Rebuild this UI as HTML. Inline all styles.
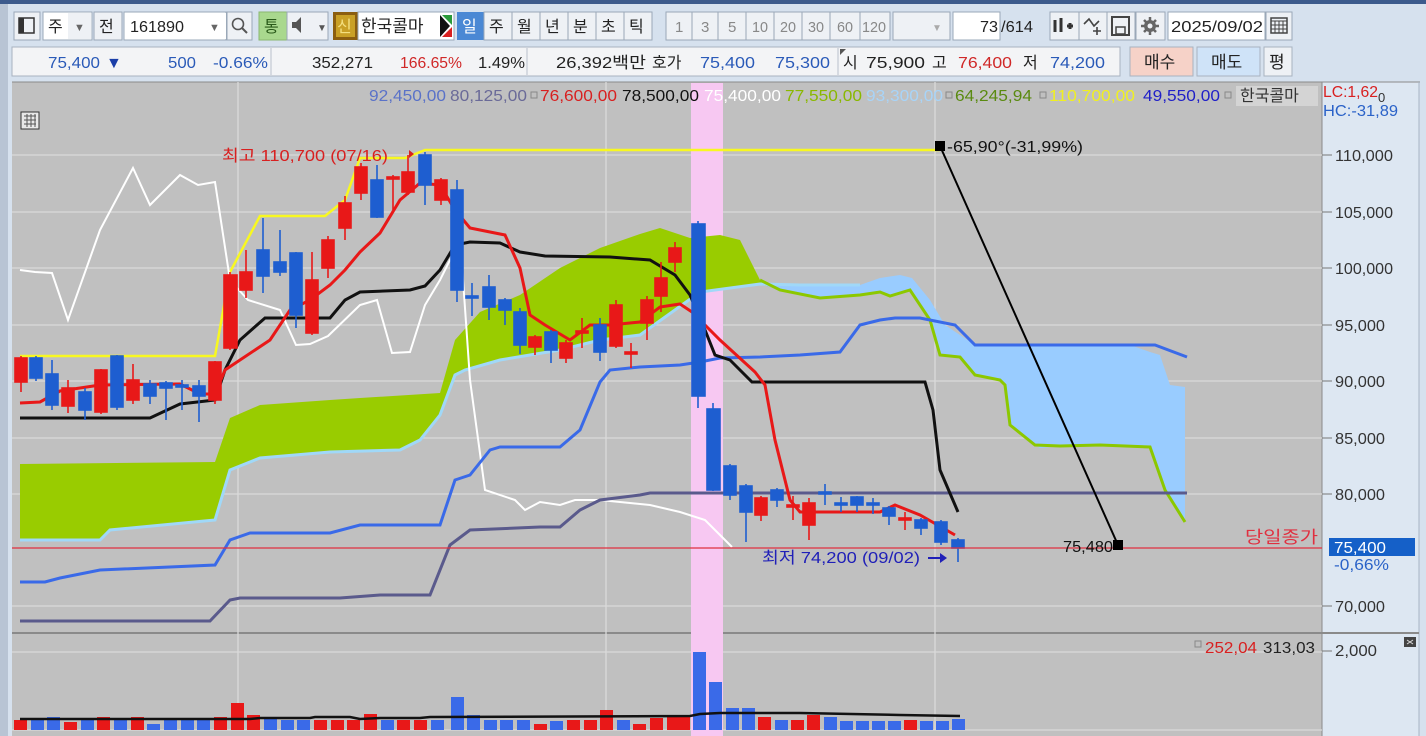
<!DOCTYPE html>
<html><head><meta charset="utf-8"><style>
html,body{margin:0;padding:0;width:1426px;height:736px;overflow:hidden;background:#d6e1ee}
svg{display:block}
text{font-family:"Liberation Sans Narrow","Liberation Sans","Noto Sans CJK KR",sans-serif}
</style></head><body>
<svg width="1426" height="736" viewBox="0 0 1426 736" xmlns="http://www.w3.org/2000/svg">
<rect x="0" y="0" width="1426" height="736" fill="#d6e1ee"/>
<rect x="0" y="0" width="1426" height="4" fill="#3c5a8c"/>
<rect x="0" y="4" width="8" height="732" fill="#b8c4d4"/>
<g font-size="16" fill="#222">
<rect x="14" y="12" width="26" height="28" fill="#eef1f5" stroke="#9aa8b8"/>
<rect x="19" y="18" width="15" height="15" fill="none" stroke="#333" stroke-width="1.5"/><rect x="19" y="18" width="5" height="15" fill="#333"/>
<rect x="43" y="12" width="49" height="28" fill="#fff" stroke="#9aa8b8"/><text x="48" y="32">주</text><rect x="68" y="13" width="23" height="26" fill="#eef1f5"/><text x="74" y="31" font-size="11" fill="#666">▼</text>
<rect x="94" y="12" width="28" height="28" fill="#eef1f5" stroke="#9aa8b8"/><text x="99" y="32">전</text>
<rect x="124" y="12" width="102" height="28" fill="#fff" stroke="#9aa8b8"/><text x="130" y="32" textLength="54" lengthAdjust="spacingAndGlyphs">161890</text>
<rect x="206" y="13" width="20" height="26" fill="#fff"/><text x="209" y="31" font-size="11" fill="#666">▼</text>
<rect x="227" y="12" width="25" height="28" fill="#eef1f5" stroke="#9aa8b8"/><circle cx="238" cy="24" r="5.5" fill="none" stroke="#555" stroke-width="1.6"/><line x1="242" y1="28" x2="247" y2="33" stroke="#555" stroke-width="2"/>
<rect x="259" y="12" width="28" height="28" fill="#a9d88e" stroke="#8ab870"/><text x="264" y="32" fill="#2a5a1a">통</text>
<rect x="287" y="12" width="41" height="28" fill="#eef1f5" stroke="#9aa8b8"/><path d="M292 22h4l5-5v16l-5-5h-4z" fill="#555"/><text x="317" y="31" font-size="10" fill="#555">▼</text>
<rect x="333" y="12" width="25" height="28" fill="#8b5e10"/><rect x="336" y="15" width="19" height="22" fill="#c9a026"/><text x="337" y="32" fill="#f4e080">신</text>
<rect x="358" y="12" width="96" height="28" fill="#fff" stroke="#9aa8b8"/><text x="361" y="32" font-size="17">한국콜마</text>
<path d="M442 15l10 10v-10z" fill="#2a9a3a"/><path d="M442 37l10-10v10z" fill="#d82020"/><path d="M440 15l10 11-10 11z" fill="#111"/>
<rect x="457" y="12" width="27" height="28" fill="#4a88d4"/><text x="462" y="32" fill="#fff">일</text>
<g fill="#eef1f5" stroke="#9aa8b8"><rect x="484" y="12" width="28" height="28"/><rect x="512" y="12" width="28" height="28"/><rect x="540" y="12" width="28" height="28"/><rect x="568" y="12" width="28" height="28"/><rect x="596" y="12" width="28" height="28"/><rect x="624" y="12" width="28" height="28"/></g>
<text x="489" y="32">주</text><text x="517" y="32">월</text><text x="545" y="32">년</text><text x="573" y="32">분</text><text x="601" y="32">초</text><text x="629" y="32">틱</text>
<g fill="#eef1f5" stroke="#9aa8b8"><rect x="666" y="12" width="26" height="28"/><rect x="692" y="12" width="26" height="28"/><rect x="718" y="12" width="28" height="28"/><rect x="746" y="12" width="28" height="28"/><rect x="774" y="12" width="28" height="28"/><rect x="802" y="12" width="28" height="28"/><rect x="830" y="12" width="30" height="28"/><rect x="860" y="12" width="30" height="28"/></g>
<g fill="#888" font-size="15"><text x="675" y="32">1</text><text x="701" y="32">3</text><text x="728" y="32">5</text><text x="752" y="32" textLength="16" lengthAdjust="spacingAndGlyphs">10</text><text x="780" y="32" textLength="16" lengthAdjust="spacingAndGlyphs">20</text><text x="808" y="32" textLength="16" lengthAdjust="spacingAndGlyphs">30</text><text x="837" y="32" textLength="16" lengthAdjust="spacingAndGlyphs">60</text><text x="862" y="32" textLength="24" lengthAdjust="spacingAndGlyphs">120</text></g>
<rect x="893" y="12" width="57" height="28" fill="#eef1f5" stroke="#9aa8b8"/><text x="932" y="31" font-size="10" fill="#aaa">▼</text>
<rect x="953" y="12" width="47" height="28" fill="#fff" stroke="#9aa8b8"/><text x="980" y="32" textLength="18" lengthAdjust="spacingAndGlyphs">73</text><text x="1001" y="32" textLength="32" lengthAdjust="spacingAndGlyphs">/614</text>
<g fill="#eef1f5" stroke="#9aa8b8"><rect x="1050" y="12" width="29" height="28"/><rect x="1079" y="12" width="28" height="28"/><rect x="1107" y="12" width="28" height="28"/><rect x="1136" y="12" width="29" height="28"/></g>
<path d="M1055 20v12M1061 18v14M1067 26h6M1070 23v6" stroke="#333" stroke-width="3"/>
<path d="M1084 24l5-5 5 7 5-5M1097 27v8M1093 31h8" stroke="#444" stroke-width="1.6" fill="none"/>
<rect x="1112" y="17" width="17" height="18" fill="none" stroke="#444" stroke-width="2"/><rect x="1116" y="27" width="9" height="7" fill="none" stroke="#444" stroke-width="1.5"/>
<path d="M1150 17v18M1141 26h18M1144 20l12 12M1156 20l-12 12" stroke="#666" stroke-width="2.5"/><circle cx="1150" cy="26" r="6" fill="#666"/><circle cx="1150" cy="26" r="2.5" fill="#eef1f5"/>
<rect x="1168" y="12" width="97" height="28" fill="#fff" stroke="#9aa8b8"/><text x="1171" y="32" textLength="92" lengthAdjust="spacingAndGlyphs">2025/09/02</text>
<rect x="1266" y="12" width="26" height="28" fill="#eef1f5" stroke="#9aa8b8"/><rect x="1271" y="18" width="16" height="15" fill="none" stroke="#444" stroke-width="1.5"/><path d="M1271 21h16M1275 21v12M1279 21v12M1283 21v12M1271 25h16M1271 29h16" stroke="#444" stroke-width="1"/>
</g>
<g font-size="16">
<rect x="12" y="47" width="1108" height="29" fill="#f3f4f6" stroke="#a8b2c0"/>
<line x1="271" y1="48" x2="271" y2="75" stroke="#b8c0cc"/><line x1="527" y1="48" x2="527" y2="75" stroke="#b8c0cc"/><line x1="838" y1="48" x2="838" y2="75" stroke="#b8c0cc"/>
<text x="48" y="68" fill="#2a5ab8" textLength="52" lengthAdjust="spacingAndGlyphs">75,400</text><text x="106" y="68" fill="#1a3ea8">▼</text>
<text x="168" y="68" fill="#2a5ab8" textLength="28" lengthAdjust="spacingAndGlyphs">500</text><text x="213" y="68" fill="#2a5ab8" textLength="55" lengthAdjust="spacingAndGlyphs">-0.66%</text>
<text x="312" y="68" fill="#222" textLength="61" lengthAdjust="spacingAndGlyphs">352,271</text><text x="400" y="68" fill="#d02828" textLength="62" lengthAdjust="spacingAndGlyphs">166.65%</text><text x="478" y="68" fill="#222" textLength="47" lengthAdjust="spacingAndGlyphs">1.49%</text>
<text x="556" y="68" fill="#222" textLength="90" lengthAdjust="spacingAndGlyphs">26,392백만</text><text x="652" y="68" fill="#222">호가</text>
<text x="700" y="68" fill="#2a5ab8" textLength="55" lengthAdjust="spacingAndGlyphs">75,400</text><text x="775" y="68" fill="#2a5ab8" textLength="55" lengthAdjust="spacingAndGlyphs">75,300</text>
<path d="M840 49h6l-6 6z" fill="#555"/><text x="843" y="68" fill="#222">시</text><text x="866" y="68" fill="#222" textLength="59" lengthAdjust="spacingAndGlyphs">75,900</text>
<text x="932" y="68" fill="#222">고</text><text x="958" y="68" fill="#d02828" textLength="54" lengthAdjust="spacingAndGlyphs">76,400</text>
<text x="1023" y="68" fill="#222">저</text><text x="1050" y="68" fill="#2a5ab8" textLength="55" lengthAdjust="spacingAndGlyphs">74,200</text>
<rect x="1130" y="47" width="63" height="29" fill="#f6d2c8" stroke="#a8b2c0"/><text x="1144" y="68" fill="#222" font-size="17">매수</text>
<rect x="1197" y="47" width="63" height="29" fill="#cfe3f8" stroke="#a8b2c0"/><text x="1211" y="68" fill="#222" font-size="17">매도</text>
<rect x="1264" y="47" width="28" height="29" fill="#eef1f5" stroke="#a8b2c0"/><text x="1269" y="68" fill="#222" font-size="17">평</text>
</g>
<rect x="12" y="82" width="1310" height="654" fill="#c0c0c0"/>
<rect x="1322" y="82" width="97" height="654" fill="#dde7f2"/>
<line x1="1322" y1="82" x2="1322" y2="736" stroke="#8a8a8a"/>
<line x1="12" y1="82" x2="1420" y2="82" stroke="#8a8a8a"/>
<line x1="1419" y1="82" x2="1419" y2="736" stroke="#a8b4c4"/>
<line x1="12" y1="633" x2="1419" y2="633" stroke="#8a8a8a" stroke-width="2"/>
<g stroke="#dadada" stroke-width="1.3">
<line x1="12" y1="155" x2="1322" y2="155"/><line x1="12" y1="212" x2="1322" y2="212"/><line x1="12" y1="268" x2="1322" y2="268"/><line x1="12" y1="325" x2="1322" y2="325"/><line x1="12" y1="381" x2="1322" y2="381"/><line x1="12" y1="438" x2="1322" y2="438"/><line x1="12" y1="494" x2="1322" y2="494"/><line x1="12" y1="606" x2="1322" y2="606"/>
<line x1="12" y1="652" x2="1322" y2="652"/><line x1="12" y1="730" x2="1322" y2="730"/>
<line x1="238" y1="82" x2="238" y2="730"/><line x1="606" y1="82" x2="606" y2="730"/><line x1="935" y1="82" x2="935" y2="730"/>
</g>
<rect x="691" y="83" width="32" height="653" fill="#f7c8f2"/>
<g font-size="16">
<text x="369" y="101" fill="#5a72c8" textLength="77" lengthAdjust="spacingAndGlyphs">92,450,00</text>
<text x="450" y="101" fill="#6a6a98" textLength="77" lengthAdjust="spacingAndGlyphs">80,125,00</text>
<rect x="531" y="92" width="6" height="6" fill="none" stroke="#888"/>
<text x="540" y="101" fill="#d82020" textLength="77" lengthAdjust="spacingAndGlyphs">76,600,00</text>
<text x="622" y="101" fill="#111" textLength="77" lengthAdjust="spacingAndGlyphs">78,500,00</text>
<text x="704" y="101" fill="#fff" textLength="77" lengthAdjust="spacingAndGlyphs">75,400,00</text>
<text x="785" y="101" fill="#8ab800" textLength="77" lengthAdjust="spacingAndGlyphs">77,550,00</text>
<text x="866" y="101" fill="#a8d4f8" textLength="77" lengthAdjust="spacingAndGlyphs">93,300,00</text>
<rect x="946" y="92" width="6" height="6" fill="none" stroke="#888"/>
<text x="955" y="101" fill="#5a8a10" textLength="77" lengthAdjust="spacingAndGlyphs">64,245,94</text>
<rect x="1040" y="92" width="6" height="6" fill="none" stroke="#888"/>
<text x="1049" y="101" fill="#f0f020" textLength="86" lengthAdjust="spacingAndGlyphs">110,700,00</text>
<text x="1143" y="101" fill="#2020c8" textLength="77" lengthAdjust="spacingAndGlyphs">49,550,00</text>
<rect x="1225" y="92" width="6" height="6" fill="none" stroke="#888"/>
<rect x="1236" y="86" width="82" height="20" fill="#d4d4d4"/>
<text x="1240" y="101" fill="#333" font-size="16">한국콜마</text>
</g>
<rect x="21" y="112" width="18" height="17" fill="#e8e8e8" stroke="#333"/><path d="M24 116h12M24 120h12M24 124h12M27 114v13M31 114v13M35 114v13" stroke="#555" stroke-width="1"/>
<polygon fill="#99cc00" points="20,464 215,462 230,418 260,405 330,400 360,398 440,393 455,340 480,312 520,295 560,268 600,248 640,234 660,228 690,238 720,235 740,240 760,280 780,290 760,284 700,292 640,335 600,340 560,350 500,360 465,370 455,375 440,415 420,440 400,450 330,452 260,458 230,470 215,520 110,530 100,540 20,540"/>
<polygon fill="#99ccff" points="760,284 800,285 860,285 880,278 900,275 912,278 930,300 945,325 960,335 975,345 1130,345 1150,352 1160,355 1170,385 1185,387 1185,522 1165,490 1150,447 1120,447 1100,445 1060,446 1040,448 1035,445 1010,425 1005,385 1000,380 975,375 960,357 940,355 930,320 910,290 890,296 880,292 820,298 780,290"/>
<polyline fill="none" stroke="#a0d8f8" stroke-width="3" points="20,540 100,540 110,530 215,520 230,470 260,458 330,452 400,450 420,440 440,415 455,375 465,370 500,360 560,350 600,340 640,335 700,292 760,284 800,285 860,285"/>
<polyline fill="none" stroke="#8cc800" stroke-width="3" points="760,280 780,290 820,298 860,295 880,292 890,296 910,290 930,320 940,355 960,357 975,375 1000,380 1005,385 1010,425 1035,445 1060,446 1100,445 1150,447 1165,490 1185,522"/>
<polyline fill="none" stroke="#f8f820" stroke-width="2.5" points="20,356 215,356 230,272 260,216 325,216 345,200 360,158 405,158 425,150 940,150"/>
<polyline fill="none" stroke="#fff" stroke-width="2" points="20,270 35,272 52,273 68,320 100,230 133,168 150,205 180,175 198,185 215,182 230,280 248,300 280,310 296,345 310,344 328,336 360,305 377,300 392,353 410,352 425,305 440,280 455,250 462,265 470,380 485,490 515,500 525,510 540,502 560,505 575,500 600,500 630,503 650,505 680,512 705,520 720,535 732,547"/>
<polyline fill="none" stroke="#5a5a8c" stroke-width="3" points="20,621 210,621 230,600 240,598 340,598 380,595 430,595 450,545 470,530 540,527 560,527 580,510 600,500 640,495 650,493 1187,493"/>
<polyline fill="none" stroke="#3a6ae8" stroke-width="3" points="20,582 45,582 60,578 100,570 215,565 230,540 250,533 330,533 360,525 440,525 455,480 470,475 490,450 500,447 560,447 580,430 600,382 610,370 640,367 680,365 700,362 720,358 760,357 800,355 840,352 860,325 880,320 895,318 920,318 955,325 975,345 1155,345 1187,357"/>
<polyline fill="none" stroke="#111" stroke-width="3" points="20,418 150,418 180,404 215,400 225,370 240,340 265,318 330,318 345,300 360,292 410,290 425,286 440,270 455,245 470,242 500,243 520,252 545,256 610,257 650,260 675,275 690,295 705,330 715,355 730,360 752,382 925,382 933,410 940,470 958,512"/>
<polyline fill="none" stroke="#e81818" stroke-width="3" points="20,403 40,402 60,391 80,388 100,385 180,384 200,394 215,394 225,370 240,360 270,340 290,310 310,300 330,285 345,270 360,252 380,233 400,200 420,183 440,185 455,210 470,228 490,232 505,235 520,268 530,315 545,325 570,340 590,325 610,325 640,322 660,307 680,304 692,312 720,340 755,372 765,385 775,440 790,500 800,512 880,512 895,505 920,515 955,535"/>
<g stroke-width="1.6">
<g stroke="#e81818" fill="#e81818">
<line x1="21" y1="356" x2="21" y2="392"/><rect x="15" y="358" width="12" height="24"/>
<line x1="68" y1="380" x2="68" y2="413"/><rect x="62" y="388" width="12" height="18"/>
<line x1="101" y1="369" x2="101" y2="414"/><rect x="95" y="370" width="12" height="42"/>
<line x1="133" y1="364" x2="133" y2="404"/><rect x="127" y="380" width="12" height="20"/>
<line x1="215" y1="361" x2="215" y2="404"/><rect x="209" y="362" width="12" height="38"/>
<line x1="230" y1="272" x2="230" y2="350"/><rect x="224" y="275" width="13" height="73"/>
<line x1="246" y1="250" x2="246" y2="298"/><rect x="240" y="272" width="12" height="18"/>
<line x1="312" y1="252" x2="312" y2="335"/><rect x="306" y="280" width="12" height="53"/>
<line x1="328" y1="236" x2="328" y2="278"/><rect x="322" y="240" width="12" height="28"/>
<line x1="345" y1="196" x2="345" y2="240"/><rect x="339" y="203" width="12" height="25"/>
<line x1="361" y1="163" x2="361" y2="200"/><rect x="355" y="167" width="12" height="26"/>
<line x1="393" y1="175" x2="393" y2="210"/><rect x="387" y="177" width="12" height="2"/>
<line x1="408" y1="155" x2="408" y2="195"/><rect x="402" y="172" width="12" height="20"/>
<line x1="441" y1="178" x2="441" y2="205"/><rect x="435" y="180" width="12" height="20"/>
<line x1="535" y1="335" x2="535" y2="355"/><rect x="529" y="337" width="12" height="10"/>
<line x1="566" y1="340" x2="566" y2="363"/><rect x="560" y="343" width="12" height="15"/>
<line x1="582" y1="318" x2="582" y2="348"/><rect x="576" y="331" width="12" height="2"/>
<line x1="616" y1="300" x2="616" y2="348"/><rect x="610" y="305" width="12" height="41"/>
<line x1="631" y1="343" x2="631" y2="368"/><rect x="625" y="352" width="12" height="2"/>
<line x1="647" y1="296" x2="647" y2="340"/><rect x="641" y="300" width="12" height="23"/>
<line x1="661" y1="262" x2="661" y2="312"/><rect x="655" y="278" width="12" height="18"/>
<line x1="675" y1="242" x2="675" y2="272"/><rect x="669" y="248" width="12" height="14"/>
<line x1="761" y1="496" x2="761" y2="521"/><rect x="755" y="498" width="12" height="17"/>
<line x1="793" y1="496" x2="793" y2="520"/><rect x="787" y="505" width="12" height="2"/>
<line x1="809" y1="498" x2="809" y2="540"/><rect x="803" y="503" width="12" height="22"/>
<line x1="905" y1="512" x2="905" y2="530"/><rect x="899" y="518" width="12" height="2"/>
</g>
<g stroke="#1e5ed0" fill="#1e5ed0">
<line x1="36" y1="356" x2="36" y2="381"/><rect x="30" y="358" width="12" height="20"/>
<line x1="52" y1="360" x2="52" y2="410"/><rect x="46" y="374" width="12" height="31"/>
<line x1="85" y1="388" x2="85" y2="420"/><rect x="79" y="392" width="12" height="18"/>
<line x1="117" y1="355" x2="117" y2="410"/><rect x="111" y="356" width="12" height="51"/>
<line x1="150" y1="380" x2="150" y2="404"/><rect x="144" y="384" width="12" height="12"/>
<line x1="166" y1="381" x2="166" y2="420"/><rect x="160" y="383" width="12" height="5"/>
<line x1="182" y1="380" x2="182" y2="410"/><rect x="176" y="385" width="12" height="2"/>
<line x1="199" y1="380" x2="199" y2="422"/><rect x="193" y="386" width="12" height="10"/>
<line x1="263" y1="218" x2="263" y2="293"/><rect x="257" y="250" width="12" height="26"/>
<line x1="280" y1="230" x2="280" y2="276"/><rect x="274" y="262" width="12" height="10"/>
<line x1="296" y1="252" x2="296" y2="328"/><rect x="290" y="253" width="12" height="62"/>
<line x1="377" y1="165" x2="377" y2="218"/><rect x="371" y="180" width="12" height="37"/>
<line x1="425" y1="152" x2="425" y2="205"/><rect x="419" y="155" width="12" height="30"/>
<line x1="457" y1="180" x2="457" y2="302"/><rect x="451" y="190" width="12" height="100"/>
<line x1="472" y1="283" x2="472" y2="316"/><rect x="466" y="296" width="12" height="2"/>
<line x1="489" y1="275" x2="489" y2="320"/><rect x="483" y="287" width="12" height="20"/>
<line x1="505" y1="298" x2="505" y2="325"/><rect x="499" y="300" width="12" height="10"/>
<line x1="520" y1="308" x2="520" y2="354"/><rect x="514" y="312" width="12" height="33"/>
<line x1="551" y1="330" x2="551" y2="363"/><rect x="545" y="332" width="12" height="18"/>
<line x1="600" y1="318" x2="600" y2="361"/><rect x="594" y="325" width="12" height="27"/>
<line x1="698" y1="221" x2="698" y2="408"/><rect x="692" y="224" width="13" height="172"/>
<line x1="713" y1="403" x2="713" y2="491"/><rect x="707" y="409" width="13" height="81"/>
<line x1="730" y1="464" x2="730" y2="500"/><rect x="724" y="466" width="12" height="29"/>
<line x1="746" y1="484" x2="746" y2="542"/><rect x="740" y="486" width="12" height="26"/>
<line x1="777" y1="488" x2="777" y2="507"/><rect x="771" y="490" width="12" height="10"/>
<line x1="825" y1="484" x2="825" y2="505"/><rect x="819" y="492" width="12" height="2"/>
<line x1="841" y1="497" x2="841" y2="512"/><rect x="835" y="503" width="12" height="2"/>
<line x1="857" y1="496" x2="857" y2="512"/><rect x="851" y="497" width="12" height="8"/>
<line x1="873" y1="498" x2="873" y2="514"/><rect x="867" y="503" width="12" height="2"/>
<line x1="889" y1="506" x2="889" y2="525"/><rect x="883" y="508" width="12" height="8"/>
<line x1="921" y1="518" x2="921" y2="535"/><rect x="915" y="520" width="12" height="8"/>
<line x1="941" y1="520" x2="941" y2="545"/><rect x="935" y="522" width="12" height="20"/>
<line x1="958" y1="538" x2="958" y2="562"/><rect x="952" y="540" width="12" height="8"/>
</g>
</g>
<line x1="12" y1="548" x2="1322" y2="548" stroke="#e03040" stroke-width="1.3"/>
<text x="1245" y="543" fill="#e03040" font-size="17" textLength="73" lengthAdjust="spacingAndGlyphs">당일종가</text>
<line x1="940" y1="146" x2="1118" y2="545" stroke="#000" stroke-width="2"/>
<rect x="935" y="141" width="10" height="10" fill="#000"/><rect x="1113" y="540" width="10" height="10" fill="#000"/>
<text x="947" y="152" fill="#111" font-size="16" textLength="136" lengthAdjust="spacingAndGlyphs">-65,90°(-31,99%)</text>
<text x="1063" y="552" fill="#111" font-size="16" textLength="50" lengthAdjust="spacingAndGlyphs">75,480</text>
<text x="222" y="161" fill="#d82020" font-size="16" textLength="166" lengthAdjust="spacingAndGlyphs">최고 110,700 (07/16)</text>
<path d="M409 150l5 4-5 4z" fill="#d82020"/>
<text x="762" y="563" fill="#2020b8" font-size="16" textLength="158" lengthAdjust="spacingAndGlyphs">최저 74,200 (09/02)</text>
<path d="M928 558h14" stroke="#2020b8" stroke-width="2"/><path d="M940 553l7 5-7 5z" fill="#2020b8"/>
<g fill="#333" font-size="16">
<text x="1323" y="97" fill="#d82020" textLength="55" lengthAdjust="spacingAndGlyphs">LC:1,62</text><text x="1378" y="102" font-size="13">0</text>
<text x="1323" y="116" fill="#2a62c8" textLength="75" lengthAdjust="spacingAndGlyphs">HC:-31,89</text>
<text x="1335" y="161" textLength="58" lengthAdjust="spacingAndGlyphs">110,000</text><text x="1335" y="218" textLength="58" lengthAdjust="spacingAndGlyphs">105,000</text><text x="1335" y="274" textLength="58" lengthAdjust="spacingAndGlyphs">100,000</text>
<text x="1335" y="331" textLength="50" lengthAdjust="spacingAndGlyphs">95,000</text><text x="1335" y="387" textLength="50" lengthAdjust="spacingAndGlyphs">90,000</text><text x="1335" y="444" textLength="50" lengthAdjust="spacingAndGlyphs">85,000</text>
<text x="1335" y="500" textLength="50" lengthAdjust="spacingAndGlyphs">80,000</text><text x="1335" y="612" textLength="50" lengthAdjust="spacingAndGlyphs">70,000</text><text x="1335" y="656" textLength="42" lengthAdjust="spacingAndGlyphs">2,000</text>
</g>
<g stroke="#777"><line x1="1322" y1="155" x2="1332" y2="155"/><line x1="1322" y1="212" x2="1332" y2="212"/><line x1="1322" y1="268" x2="1332" y2="268"/><line x1="1322" y1="325" x2="1332" y2="325"/><line x1="1322" y1="381" x2="1332" y2="381"/><line x1="1322" y1="438" x2="1332" y2="438"/><line x1="1322" y1="494" x2="1332" y2="494"/><line x1="1322" y1="606" x2="1332" y2="606"/><line x1="1322" y1="651" x2="1332" y2="651"/></g>
<rect x="1329" y="538" width="86" height="18" fill="#1560c8"/>
<text x="1334" y="553" fill="#fff" font-size="16" textLength="52" lengthAdjust="spacingAndGlyphs">75,400</text>
<text x="1334" y="570" fill="#2a62c8" font-size="16" textLength="55" lengthAdjust="spacingAndGlyphs">-0,66%</text>
<rect x="1404" y="637" width="12" height="10" fill="#444"/><path d="M1407 644l6-4M1407 640l6 4" stroke="#ddd" stroke-width="1"/>
<rect x="1195" y="641" width="6" height="6" fill="none" stroke="#888"/>
<text x="1205" y="653" fill="#d82020" font-size="16" textLength="52" lengthAdjust="spacingAndGlyphs">252,04</text>
<text x="1263" y="653" fill="#222" font-size="16" textLength="52" lengthAdjust="spacingAndGlyphs">313,03</text>
<g>
<rect x="14" y="720" width="13" height="10" fill="#e81818"/>
<rect x="31" y="720" width="13" height="10" fill="#3a6ae8"/>
<rect x="47" y="717" width="13" height="13" fill="#3a6ae8"/>
<rect x="64" y="722" width="13" height="8" fill="#e81818"/>
<rect x="81" y="720" width="13" height="10" fill="#3a6ae8"/>
<rect x="97" y="717" width="13" height="13" fill="#e81818"/>
<rect x="114" y="720" width="13" height="10" fill="#3a6ae8"/>
<rect x="131" y="717" width="13" height="13" fill="#e81818"/>
<rect x="147" y="724" width="13" height="6" fill="#3a6ae8"/>
<rect x="164" y="720" width="13" height="10" fill="#3a6ae8"/>
<rect x="181" y="720" width="13" height="10" fill="#3a6ae8"/>
<rect x="197" y="720" width="13" height="10" fill="#3a6ae8"/>
<rect x="214" y="717" width="13" height="13" fill="#e81818"/>
<rect x="231" y="703" width="13" height="27" fill="#e81818"/>
<rect x="247" y="715" width="13" height="15" fill="#e81818"/>
<rect x="264" y="717" width="13" height="13" fill="#3a6ae8"/>
<rect x="281" y="720" width="13" height="10" fill="#3a6ae8"/>
<rect x="297" y="720" width="13" height="10" fill="#3a6ae8"/>
<rect x="314" y="720" width="13" height="10" fill="#e81818"/>
<rect x="331" y="720" width="13" height="10" fill="#e81818"/>
<rect x="347" y="720" width="13" height="10" fill="#e81818"/>
<rect x="364" y="714" width="13" height="16" fill="#e81818"/>
<rect x="381" y="720" width="13" height="10" fill="#3a6ae8"/>
<rect x="397" y="720" width="13" height="10" fill="#e81818"/>
<rect x="414" y="720" width="13" height="10" fill="#e81818"/>
<rect x="431" y="720" width="13" height="10" fill="#3a6ae8"/>
<rect x="451" y="697" width="13" height="33" fill="#3a6ae8"/>
<rect x="467" y="715" width="13" height="15" fill="#3a6ae8"/>
<rect x="484" y="720" width="13" height="10" fill="#3a6ae8"/>
<rect x="500" y="720" width="13" height="10" fill="#3a6ae8"/>
<rect x="517" y="720" width="13" height="10" fill="#3a6ae8"/>
<rect x="534" y="724" width="13" height="6" fill="#e81818"/>
<rect x="550" y="721" width="13" height="9" fill="#3a6ae8"/>
<rect x="567" y="720" width="13" height="10" fill="#e81818"/>
<rect x="584" y="720" width="13" height="10" fill="#e81818"/>
<rect x="600" y="710" width="13" height="20" fill="#e81818"/>
<rect x="617" y="720" width="13" height="10" fill="#3a6ae8"/>
<rect x="633" y="724" width="13" height="6" fill="#e81818"/>
<rect x="650" y="718" width="13" height="12" fill="#e81818"/>
<rect x="667" y="715" width="13" height="15" fill="#e81818"/>
<rect x="677" y="715" width="13" height="15" fill="#e81818"/>
<rect x="693" y="652" width="13" height="78" fill="#3a6ae8"/>
<rect x="709" y="682" width="13" height="48" fill="#3a6ae8"/>
<rect x="726" y="708" width="13" height="22" fill="#3a6ae8"/>
<rect x="742" y="708" width="13" height="22" fill="#3a6ae8"/>
<rect x="758" y="717" width="13" height="13" fill="#e81818"/>
<rect x="775" y="720" width="13" height="10" fill="#3a6ae8"/>
<rect x="791" y="720" width="13" height="10" fill="#e81818"/>
<rect x="807" y="715" width="13" height="15" fill="#e81818"/>
<rect x="824" y="717" width="13" height="13" fill="#3a6ae8"/>
<rect x="840" y="721" width="13" height="9" fill="#3a6ae8"/>
<rect x="856" y="721" width="13" height="9" fill="#3a6ae8"/>
<rect x="872" y="721" width="13" height="9" fill="#3a6ae8"/>
<rect x="888" y="721" width="13" height="9" fill="#3a6ae8"/>
<rect x="904" y="720" width="13" height="10" fill="#e81818"/>
<rect x="920" y="721" width="13" height="9" fill="#3a6ae8"/>
<rect x="936" y="721" width="13" height="9" fill="#3a6ae8"/>
<rect x="952" y="719" width="13" height="11" fill="#3a6ae8"/>
</g>
<polyline fill="none" stroke="#111" stroke-width="2.5" points="20,719 250,719 260,718 310,718 315,717 350,717 360,719 380,718 420,718 430,717 690,716 700,714 720,713 800,713 900,715 960,716"/>
</svg>
</body></html>
